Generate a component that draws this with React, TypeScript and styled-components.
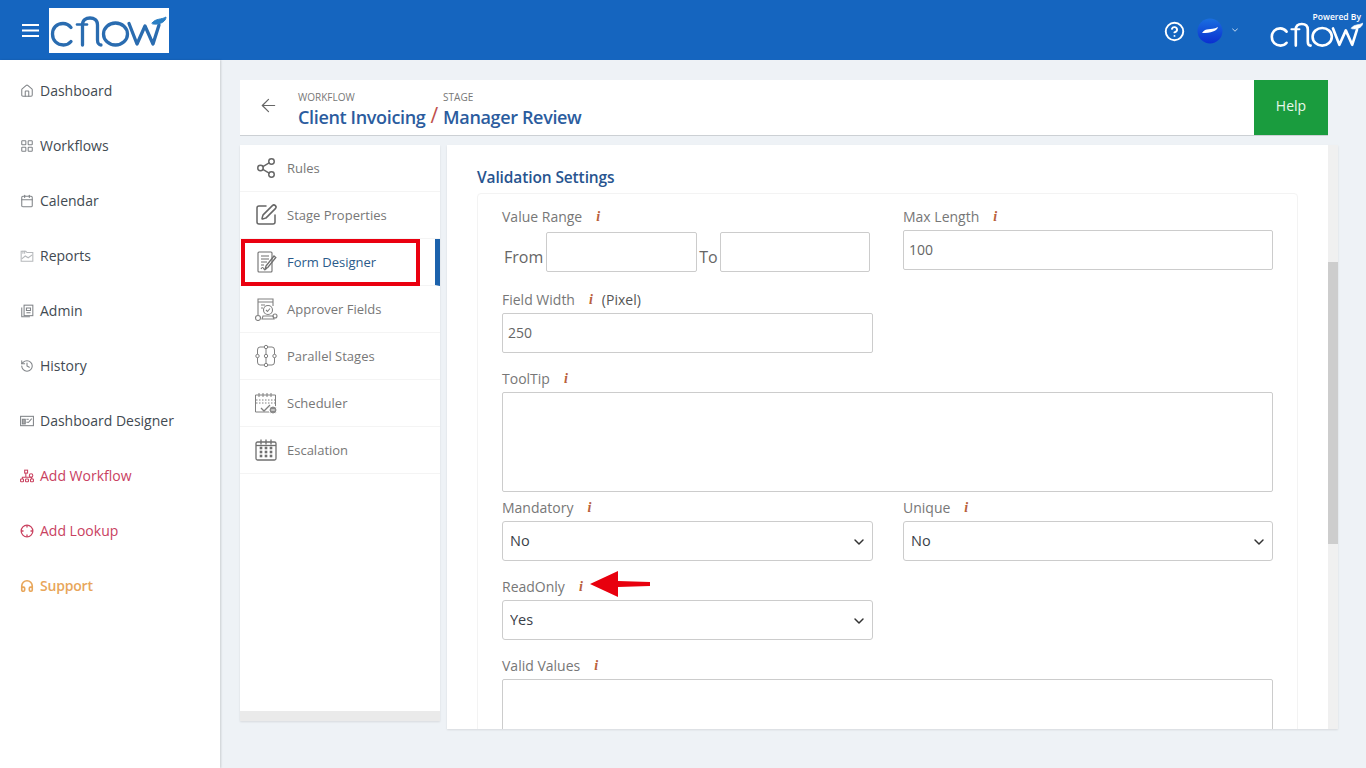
import React from "react";
import styled, { createGlobalStyle } from "styled-components";
import {
  CircleHelp, ChevronDown, ArrowLeft, Share2, SquarePen, Home, LayoutGrid, Calendar, History, Headphones,
} from "lucide-react";

const Global = createGlobalStyle`
  html, body { margin: 0; padding: 0; height: 768px; overflow: hidden; background: #eef2f6; }
  body { font-family: "Open Sans", "Liberation Sans", sans-serif; }
  * { box-sizing: border-box; }
`;

const Page = styled.div`display: flex; flex-direction: column; width: 1366px; height: 768px;`;
const Header = styled.header`
  height: 60px; background: #1565bf; display: flex; align-items: center; padding-left: 22px; color: #fff; flex: none;
`;
const LogoBox = styled.div`width: 120px; height: 45px; background: #fff; margin-left: 10px; margin-top: 1px;`;
const HeaderRight = styled.div`margin-left: auto; display: flex; align-items: center; padding-right: 1px;`;
const HelpIcon = styled.div`display: flex; margin-top: 2px;`;
const Avatar = styled.div`margin-left: 12px; width: 26px; height: 26px; display: flex; margin-top: 2px;`;
const SmallChevron = styled.div`margin-left: 7px; width: 10px; display: flex; opacity: .9;`;
const Powered = styled.div`margin-left: 29px; width: 96px; display: flex; flex-direction: column; align-items: flex-end; padding-top: 3px;`;
const PoweredText = styled.span`font-size: 8.5px; font-weight: 600; line-height: 11px; margin-right: 4px;`;
const PoweredLogo = styled.div`width: 96px; height: 36px; margin-top: -6px;`;

const Body = styled.div`flex: 1; display: flex; min-height: 0;`;
const Sidebar = styled.nav`width: 220px; background: #fff; padding-top: 3px; flex: none; box-shadow: 1px 0 2px rgba(0,0,0,.15);`;
const NavItem = styled.div<{ $c?: string; $w?: number }>`
  height: 55px; display: flex; align-items: center; padding-left: 20px; gap: 6px;
  font-size: 14px; color: ${p => p.$c || "#424a52"}; font-weight: ${p => p.$w || 400};
  letter-spacing: ${p => p.$w ? "-0.2px" : "0"};
  svg { flex: none; }
`;

const Main = styled.main`flex: 1; padding: 20px 28px 0 20px; min-width: 0;`;
const TitleBar = styled.div`
  height: 56px; margin-right: 10px; background: #fff; border-bottom: 1px solid #ccd0d4; display: flex; align-items: flex-start; padding-left: 18px;
`;
const BackIcon = styled.div`display: flex; margin-top: 15px; color: #666; margin-right: 19px;`;
const Crumb = styled.div`display: flex; flex-direction: column; padding-top: 11px;`;
const CrumbLabel = styled.span`font-size: 10px; color: #777; line-height: 13px;`;
const CrumbValue = styled.span`font-size: 18px; font-weight: 600; color: #2b5c9e; line-height: 26px; letter-spacing: -0.35px; white-space: nowrap;`;
const Slash = styled.span`font-size: 21px; font-weight: 400; color: #c0504d; margin: 22px 4px 0 5px; padding-right: 1px; line-height: 26px;`;
const HelpBtn = styled.div`
  margin-left: auto; width: 74px; height: 55px; background: #1a9c3e; color: #e8f8ea; font-size: 14px; display: flex; align-items: center; justify-content: center; padding-bottom: 4px;
`;

const Content = styled.div`display: flex; gap: 7px; margin-top: 9px; height: 584px; align-items: flex-start;`;
const Tabs = styled.div`
  width: 200px; height: 576px; background: #fff; border-bottom: 10px solid #eaeaea; flex: none; box-shadow: 0 1px 2px rgba(0,0,0,.1);
`;
const Tab = styled.div<{ $active?: boolean }>`
  position: relative; height: 47px; display: flex; align-items: center; border-bottom: 1px solid #f4f4f4; font-size: 13px; color: ${p => p.$active ? "#2a5a8a" : "#777"};
  ${p => p.$active ? "border-right: 5px solid #1c62ac;" : ""}
`;
const TabIcon = styled.div`width: 47px; display: flex; justify-content: center; padding-left: 5px; color: #666; flex: none;`;
const RedBox = styled.div`position: absolute; left: 1px; top: 0; width: 179px; height: 47px; border: 4px solid #ea0010;`;

const Panel = styled.section`flex: 1; height: 584px; background: #fff; display: flex; overflow: hidden; box-shadow: 0 1px 2px rgba(0,0,0,.1);`;
const PanelInner = styled.div`flex: 1; padding: 20px 30px 0 30px; overflow: hidden;`;
const Track = styled.div`width: 10px; background: #f0f0f0; flex: none; padding-top: 117px;`;
const Thumb = styled.div`height: 282px; background: #cdcdcd;`;
const SectionTitle = styled.h3`margin: 0; font-size: 15.5px; line-height: 24px; font-weight: 600; color: #27548f; letter-spacing: -0.12px;`;
const Card = styled.div`margin-top: 4px; border: 1px solid #f3f3f3; border-radius: 4px; padding: 12px 24px 0 24px; height: 600px;`;
const Grid = styled.div`display: grid; grid-template-columns: 371px 370px; column-gap: 30px;`;
const Field = styled.div<{ $full?: boolean; $gap?: number }>`
  ${p => p.$full ? "grid-column: 1 / -1;" : ""}
  margin-bottom: ${p => p.$gap ?? 15}px;
`;
const Label = styled.div`position: relative; height: 20px; line-height: 22px; margin-bottom: 4px; font-size: 14px; color: #777; display: flex; white-space: nowrap;`;
const Info = styled.i`font-family: "Liberation Serif", serif; font-weight: 700; font-size: 14px; color: #b9603c; margin-left: 14px; margin-right: 9px;`;
const Pixel = styled.span`color: #555; font-size: 14px;`;
const Input = styled.input`
  display: block; width: 100%; height: 40px; border: 1px solid #ccc; border-radius: 2px; padding: 0 5px 2px; background: #fff;
  font: 14px "Open Sans", sans-serif; color: #666; outline: none;
`;
const TextArea = styled.textarea<{ $h: number }>`
  display: block; width: 100%; height: ${p => p.$h}px; border: 1px solid #ccc; border-radius: 2px; resize: none; background: #fff; outline: none;
`;
const RangeRow = styled.div`display: flex; align-items: center; height: 40px; margin-top: 6px; margin-bottom: 2px; padding-left: 2px; font-size: 16px; color: #666;`;
const RangeInput = styled(Input)<{ $w: number }>`width: ${p => p.$w}px; margin: 0 3px 0 3px; flex: none;`;
const RangeFrom = styled.span`padding-top: 10px;`;
const RangeTo = styled.span`width: 18px; margin-left: -1px; padding-top: 10px;`;
const SelectWrap = styled.div`position: relative; height: 40px;`;
const Select = styled.select`
  appearance: none; width: 100%; height: 40px; border: 1px solid #ccc; border-radius: 3px; background: #fff; padding: 0 7px 2px;
  font: 14.5px "Open Sans", sans-serif; color: #3a4148; outline: none;
`;
const Caret = styled.div`position: absolute; right: 6px; top: 13px; display: flex; color: #333; pointer-events: none;`;
const ArrowMark = styled.svg`position: absolute; left: 88px; top: -6px;`;

const Logo = ({ color, swoosh }: { color: string; swoosh: string }) => (
  <svg viewBox="0 0 120 45" width="100%" height="100%" fill="none" stroke={color} strokeWidth="3.300" strokeLinecap="round" strokeLinejoin="round">
    <path d="M22 19.500C20 17 17 15.500 14 15.500C7.500 15.500 3.500 20 3.500 26C3.500 32.500 8 37 14.500 37C17.500 37 20 36 22 33.500" />
    <path d="M28 16.500H38" strokeWidth="2.600" />
    <path d="M33.500 37V17C33.500 12 37 10 41 10C45 10 48.500 12 48.500 17V32C48.500 35 50 37 52 37" />
    <ellipse cx="66.500" cy="26" rx="12" ry="11" />
    <path d="M80 15.500L88 36L96 18L104 36L110 17" />
    <path d="M103 15C107 10 112 12 117 9C117 13 112 17 104 16Z" fill={swoosh} stroke={swoosh} strokeWidth="1" />
  </svg>
);

const s = { width: 14, height: 14, viewBox: "0 0 24 24", fill: "none", stroke: "#808488", strokeWidth: 1.8 } as const;
const ReportIcon = () => (
  <svg {...s} stroke="#b5b8bb"><path d="M2 4h8l2 2h10v15H2z" /><path d="M3 17l6-5 5 3 7-5" /><path d="M5 3v5M8 3v5" /></svg>
);
const AdminIcon = () => (
  <svg {...s}><rect x="7" y="2" width="15" height="18" /><path d="M3 6v16h14" /><path d="M11 7h7v4h-7z" /><path d="M11 15h7" /></svg>
);
const DesignerIcon = () => (
  <svg {...s}><rect x="1" y="4" width="22" height="16" /><rect x="4" y="9" width="5" height="8" fill="#aaa" /><path d="M11 9h4M11 14h4M14 15l6-7" /></svg>
);
const FlowIcon = () => (
  <svg {...s} stroke="#c9415f"><rect x="8" y="2" width="5" height="5" /><circle cx="19" cy="11" r="3" /><path d="M10 7v7M4 17v-3h16v3" />
    <rect x="1" y="17" width="5" height="5" rx="1" /><rect x="9.500" y="17" width="5" height="5" rx="1" /><rect x="18" y="17" width="5" height="5" rx="1" /></svg>
);
const LookupIcon = () => (
  <svg {...s} stroke="#c9415f" strokeWidth={2.2}><circle cx="12" cy="12" r="10" /><path d="M12 2v4M12 18v4M2 12h4M18 12h4" /></svg>
);

const t = { width: 24, height: 24, viewBox: "0 0 24 24", fill: "none", stroke: "#808080", strokeWidth: 1.1 } as const;
const FormIcon = () => (
  <svg {...t} stroke="#6f6f6f"><rect x="4" y="2" width="14" height="20" rx="1" /><path d="M7 6h8M7 9h8M7 12h6M7 15h3M7 19c1-2 2-2 3 0s2 0 3-1" /><path d="M12 16l8-10 1.800 1.500-8 10-2.500 1z" strokeWidth="1.300" /></svg>
);
const ApproverIcon = () => (
  <svg {...t}><path d="M4 18V2h15v7" /><path d="M4 5h15M7 8h4M7 11h2" /><circle cx="14" cy="13" r="4.500" /><path d="M12 13l1.500 1.500 2.500-3" />
    <path d="M9 19h10l1 3H8z" /><circle cx="4" cy="21" r="2.500" /><circle cx="21" cy="19" r="2" /></svg>
);
const ParallelIcon = () => (
  <svg {...t} strokeWidth={1}><circle cx="12" cy="3" r="1.700" /><circle cx="12" cy="12" r="1.700" /><circle cx="12" cy="21" r="1.700" /><circle cx="3.500" cy="12" r="1.700" /><circle cx="20.500" cy="12" r="1.700" />
    <path d="M10.300 3H6Q3.500 3 3.500 6V10.300M13.700 3H18Q20.500 3 20.500 6V10.300M3.500 13.700V18Q3.500 21 6 21H10.300M20.500 13.700V18Q20.500 21 18 21H13.700M12 4.700V10.300M12 13.700V19.300" /></svg>
);
const SchedulerIcon = () => (
  <svg {...t} strokeWidth={1}><path d="M16 21H1.500V4h20v11" /><path d="M5 2v4M9 2v4M13 2v4M17 2v4" /><path d="M2 9h19" strokeDasharray="1.500 1.500" /><path d="M2 12h19" strokeDasharray="1.500 1.500" /><path d="M7 17l3 3 6-6" strokeWidth="1.300" /><circle cx="19" cy="19" r="4" fill="#8a8a8a" stroke="#fff" /><path d="M17.200 19h3.600" stroke="#fff" /></svg>
);
const GridCalIcon = () => (
  <svg {...t} stroke="#6f6f6f" strokeWidth={1.300}><rect x="2" y="4" width="20" height="18" rx="1.500" /><path d="M7 1.500v5M12 1.500v5M17 1.500v5" /><path d="M2 7.500h20" />
    <g fill="#6f6f6f" stroke="none">
      {[7, 12, 17].map(x => [10, 14, 18].map(y => <rect key={`${x}-${y}`} x={x - 1.300} y={y - 1.300} width="2.600" height="2.600" />))}
    </g></svg>
);
const MenuGlyph = () => (
  <svg width="17" height="13" viewBox="0 0 17 13" stroke="#fff" strokeWidth="2"><path d="M0 1H17M0 6.500H17M0 12H17" /></svg>
);

const navs: { icon: React.ReactNode; label: string; c?: string; w?: number }[] = [
  { icon: <Home size={14} color="#808488" strokeWidth={1.800} />, label: "Dashboard" },
  { icon: <LayoutGrid size={14} color="#808488" strokeWidth={1.800} />, label: "Workflows" },
  { icon: <Calendar size={14} color="#808488" strokeWidth={1.800} />, label: "Calendar" },
  { icon: <ReportIcon />, label: "Reports" },
  { icon: <AdminIcon />, label: "Admin" },
  { icon: <History size={14} color="#808488" strokeWidth={1.800} />, label: "History" },
  { icon: <DesignerIcon />, label: "Dashboard Designer" },
  { icon: <FlowIcon />, label: "Add Workflow", c: "#c9415f" },
  { icon: <LookupIcon />, label: "Add Lookup", c: "#c9415f" },
  { icon: <Headphones size={14} color="#e8a65a" strokeWidth={2.800} />, label: "Support", c: "#e8a65a", w: 600 },
];

const tabs: { icon: React.ReactNode; label: string; active?: boolean }[] = [
  { icon: <Share2 size={22} strokeWidth={1.600} />, label: "Rules" },
  { icon: <SquarePen size={24} strokeWidth={1.500} />, label: "Stage Properties" },
  { icon: <FormIcon />, label: "Form Designer", active: true },
  { icon: <ApproverIcon />, label: "Approver Fields" },
  { icon: <ParallelIcon />, label: "Parallel Stages" },
  { icon: <SchedulerIcon />, label: "Scheduler" },
  { icon: <GridCalIcon />, label: "Escalation" },
];

const Caption = ({ text, children }: { text: string; children?: React.ReactNode }) => (
  <Label>{text}<Info>i</Info>{children}</Label>
);

const Dropdown = ({ value }: { value: string }) => (
  <SelectWrap>
    <Select defaultValue={value}><option>No</option><option>Yes</option></Select>
    <Caret><ChevronDown size={16} strokeWidth={2.200} /></Caret>
  </SelectWrap>
);

export default function App() {
  return (
    <Page>
      <Global />
      <Header>
        <MenuGlyph />
        <LogoBox><Logo color="#2a6cb0" swoosh="#2a7fc4" /></LogoBox>
        <HeaderRight>
          <HelpIcon><CircleHelp size={21} strokeWidth={2.200} /></HelpIcon>
          <Avatar>
            <svg viewBox="0 0 26 26" width="26" height="26">
              <defs><linearGradient id="av" x1="0" y1="0" x2="0" y2="1"><stop offset="0" stopColor="#1a6fe0" /><stop offset="1" stopColor="#0a2fd0" /></linearGradient></defs>
              <circle cx="13" cy="13" r="12.500" fill="url(#av)" />
              <path d="M5 15C9 9 13 13 21 9C20 13 14 15 5 15Z" fill="#fff" />
            </svg>
          </Avatar>
          <SmallChevron><ChevronDown size={10} strokeWidth={2} /></SmallChevron>
          <Powered>
            <PoweredText>Powered By</PoweredText>
            <PoweredLogo><Logo color="#ffffff" swoosh="#ffffff" /></PoweredLogo>
          </Powered>
        </HeaderRight>
      </Header>
      <Body>
        <Sidebar>
          {navs.map(n => <NavItem key={n.label} $c={n.c} $w={n.w}>{n.icon}{n.label}</NavItem>)}
        </Sidebar>
        <Main>
          <TitleBar>
            <BackIcon><ArrowLeft size={21} strokeWidth={1.400} /></BackIcon>
            <Crumb><CrumbLabel>WORKFLOW</CrumbLabel><CrumbValue>Client Invoicing</CrumbValue></Crumb>
            <Slash>/</Slash>
            <Crumb><CrumbLabel>STAGE</CrumbLabel><CrumbValue>Manager Review</CrumbValue></Crumb>
            <HelpBtn>Help</HelpBtn>
          </TitleBar>
          <Content>
            <Tabs>
              {tabs.map(x => (
                <Tab key={x.label} $active={x.active}>
                  <TabIcon>{x.icon}</TabIcon>{x.label}
                  {x.active && <RedBox />}
                </Tab>
              ))}
            </Tabs>
            <Panel>
              <PanelInner>
                <SectionTitle>Validation Settings</SectionTitle>
                <Card>
                  <Grid>
                    <Field>
                      <Caption text="Value Range" />
                      <RangeRow>
                        <RangeFrom>From</RangeFrom><RangeInput $w={151} />
                        <RangeTo>To</RangeTo><RangeInput $w={150} />
                      </RangeRow>
                    </Field>
                    <Field><Caption text="Max Length" /><Input defaultValue="100" /></Field>
                    <Field><Caption text="Field Width"><Pixel>(Pixel)</Pixel></Caption><Input defaultValue="250" /></Field>
                    <div />
                    <Field $full $gap={5}><Caption text="ToolTip" /><TextArea $h={100} /></Field>
                    <Field><Caption text="Mandatory" /><Dropdown value="No" /></Field>
                    <Field><Caption text="Unique" /><Dropdown value="No" /></Field>
                    <Field>
                      <Label>ReadOnly<Info>i</Info>
                        <ArrowMark width="62" height="28" viewBox="0 0 62 28">
                          <path d="M0 14L28 1V11L60 12V16L28 17V27Z" fill="#e8000e" />
                        </ArrowMark>
                      </Label>
                      <Dropdown value="Yes" />
                    </Field>
                    <div />
                    <Field $full><Caption text="Valid Values" /><TextArea $h={100} /></Field>
                  </Grid>
                </Card>
              </PanelInner>
              <Track><Thumb /></Track>
            </Panel>
          </Content>
        </Main>
      </Body>
    </Page>
  );
}
